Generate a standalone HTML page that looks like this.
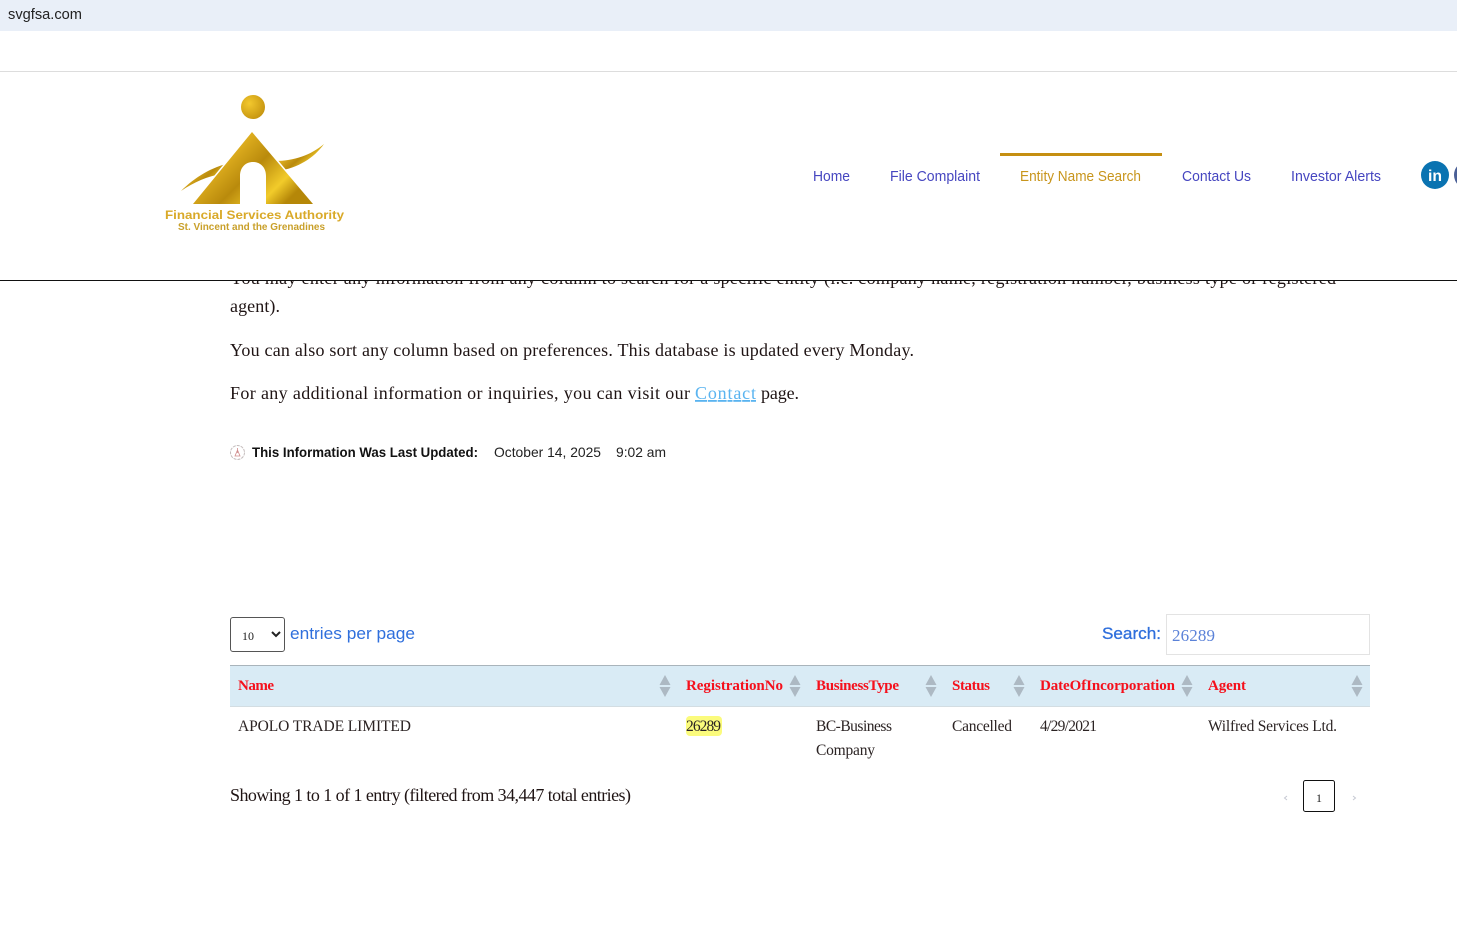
<!DOCTYPE html>
<html lang="en">
<head>
<meta charset="utf-8">
<title>Entity Name Search</title>
<style>
html,body{margin:0;padding:0;background:#fff;width:1457px;height:940px;overflow:hidden}
svg.page{position:absolute;left:0;top:0}
select{position:absolute;left:230px;top:617px;width:55px;height:35px;box-sizing:border-box;border:1px solid #555;border-radius:3px;background:#fff;font:12px "Liberation Serif",serif;color:#222;padding:3px 0 0 7px;margin:0}
.sans{font-family:"Liberation Sans",sans-serif}
.serif{font-family:"Liberation Serif",serif}
</style>
</head>
<body>
<svg class="page" width="1457" height="940" viewBox="0 0 1457 940" xmlns="http://www.w3.org/2000/svg">
<defs>
<linearGradient id="g" x1="0" y1="0" x2="1" y2="0.6">
<stop offset="0" stop-color="#a87c08"/><stop offset=".35" stop-color="#e0b020"/><stop offset=".6" stop-color="#b98a0c"/><stop offset=".85" stop-color="#f2cb2a"/><stop offset="1" stop-color="#b58708"/>
</linearGradient>
<radialGradient id="c" cx=".35" cy=".35" r=".8"><stop offset="0" stop-color="#f3c82e"/><stop offset="1" stop-color="#c08e0c"/></radialGradient>
</defs>

<g class="serif" font-size="18" fill="#1f1414">
<text x="230" y="284" textLength="1106">You may enter any information from any column to search for a specific entity (i.e. company name, registration number, business type or registered</text>
<text x="230" y="312" textLength="50">agent).</text>
<text x="230" y="356" textLength="684">You can also sort any column based on preferences. This database is updated every Monday.</text>
<text x="230" y="399" textLength="460">For any additional information or inquiries, you can visit our</text>
<text x="695" y="399" textLength="61" fill="#5ab4f0" text-decoration="underline">Contact</text>
<text x="761" y="399" textLength="38">page.</text>
</g>

<rect x="0" y="0" width="1457" height="31" fill="#e9eff8"/>
<text class="sans" x="8" y="19" font-size="14.5" fill="#222" textLength="74" lengthAdjust="spacingAndGlyphs">svgfsa.com</text>
<rect x="0" y="71" width="1457" height="1" fill="#ddd"/>
<rect x="0" y="72" width="1457" height="208" fill="#fff"/>
<rect x="0" y="280" width="1457" height="1" fill="#111"/>

<circle cx="253" cy="107" r="12" fill="url(#c)"/>
<path d="M181 191C195 177 212 167 230 163L222 174C208 176 194 182 181 191Z" fill="url(#g)"/>
<path d="M275 161C294 161 311 155 324 144C314 158 298 168 278 171Z" fill="url(#g)"/>
<path fill-rule="evenodd" d="M252 132L313 204H266V176C266 167 260 162 253 162C246 162 240 167 240 176V204H193Z" fill="url(#g)" stroke="#fff" stroke-width="3" paint-order="stroke"/>
<text class="sans" x="165" y="219" font-size="12" font-weight="bold" fill="#d9a928" textLength="179" lengthAdjust="spacingAndGlyphs">Financial Services Authority</text>
<text class="sans" x="178" y="230" font-size="10" font-weight="bold" fill="#c9a02a" textLength="147" lengthAdjust="spacingAndGlyphs">St. Vincent and the Grenadines</text>

<g class="sans" font-size="14.5" fill="#4646c0">
<text x="813" y="181" textLength="37" lengthAdjust="spacingAndGlyphs">Home</text>
<text x="890" y="181" textLength="90" lengthAdjust="spacingAndGlyphs">File Complaint</text>
<text x="1020" y="181" textLength="121" lengthAdjust="spacingAndGlyphs" fill="#c8951c">Entity Name Search</text>
<text x="1182" y="181" textLength="69" lengthAdjust="spacingAndGlyphs">Contact Us</text>
<text x="1291" y="181" textLength="90" lengthAdjust="spacingAndGlyphs">Investor Alerts</text>
</g>
<rect x="1000" y="153" width="162" height="3" fill="#c58f12"/>
<circle cx="1435" cy="175" r="14" fill="#0a73b1"/>
<text class="sans" x="1428" y="181" font-size="16" font-weight="bold" fill="#fff" textLength="14" lengthAdjust="spacingAndGlyphs">in</text>
<circle cx="1468" cy="175" r="14" fill="#4a5f96"/>

<circle cx="237.5" cy="452.5" r="7" fill="none" stroke="#c4bcbc" stroke-width="1" stroke-dasharray="3 1"/>
<path d="M237.5 448V453M235 456L237.5 450L240 456Z" fill="none" stroke="#d08a8a" stroke-width=".8"/>
<text class="sans" x="252" y="457" font-size="14" font-weight="bold" fill="#111" textLength="226" lengthAdjust="spacingAndGlyphs">This Information Was Last Updated:</text>
<text class="sans" x="494" y="457" font-size="14" fill="#222" textLength="107" lengthAdjust="spacingAndGlyphs">October 14, 2025</text>
<text class="sans" x="616" y="457" font-size="14" fill="#222" textLength="50" lengthAdjust="spacingAndGlyphs">9:02 am</text>

<text class="sans" x="290" y="639" font-size="17" fill="#2f6fdc" textLength="125" lengthAdjust="spacingAndGlyphs">entries per page</text>
<text class="sans" x="1102" y="639" font-size="16.5" fill="#2f6fdc" textLength="59" lengthAdjust="spacingAndGlyphs" stroke="#2f6fdc" stroke-width=".3">Search:</text>
<rect x="1166.5" y="614.5" width="203" height="40" fill="#fff" stroke="#e3e3e3"/>
<text class="serif" x="1172" y="641" font-size="17" fill="#5b82d8" textLength="43">26289</text>

<rect x="230" y="665" width="1140" height="42" fill="#d9ebf5"/>
<rect x="230" y="665" width="1140" height="1" fill="#a9b4bb"/>
<rect x="230" y="706" width="1140" height="1" fill="#d3dde2"/>
<g class="serif" font-size="15" font-weight="bold" fill="#f5101c">
<text x="238" y="690" textLength="36">Name</text>
<text x="686" y="690" textLength="97">RegistrationNo</text>
<text x="816" y="690" textLength="83">BusinessType</text>
<text x="952" y="690" textLength="38">Status</text>
<text x="1040" y="690" textLength="135">DateOfIncorporation</text>
<text x="1208" y="690" textLength="38">Agent</text>
</g>
<g fill="#adb9c3">
<path d="M659.5 685L665 675L670.5 685ZM659.5 687L665 697L670.5 687Z"/>
<path d="M789.5 685L795 675L800.5 685ZM789.5 687L795 697L800.5 687Z"/>
<path d="M925.5 685L931 675L936.5 685ZM925.5 687L931 697L936.5 687Z"/>
<path d="M1013.5 685L1019 675L1024.5 685ZM1013.5 687L1019 697L1024.5 687Z"/>
<path d="M1181.5 685L1187 675L1192.5 685ZM1181.5 687L1187 697L1192.5 687Z"/>
<path d="M1351.5 685L1357 675L1362.5 685ZM1351.5 687L1357 697L1362.5 687Z"/>
</g>

<rect x="686" y="716" width="36" height="20" rx="4" fill="#fbfb7c"/>
<g class="serif" font-size="15.5" fill="#2b2323">
<text x="238" y="731" textLength="173">APOLO TRADE LIMITED</text>
<text x="686" y="731" textLength="35">26289</text>
<text x="816" y="731" textLength="76">BC-Business</text>
<text x="816" y="755" textLength="59">Company</text>
<text x="952" y="731" textLength="60">Cancelled</text>
<text x="1040" y="731" textLength="57">4/29/2021</text>
<text x="1208" y="731" textLength="129">Wilfred Services Ltd.</text>
</g>
<text class="serif" x="230" y="801" font-size="18" fill="#1f1414" textLength="401">Showing 1 to 1 of 1 entry (filtered from 34,447 total entries)</text>

<rect x="1303.5" y="780.5" width="31" height="31" rx="2" fill="#fff" stroke="#111"/>
<text class="serif" x="1319" y="802" font-size="12" fill="#222" text-anchor="middle">1</text>
<path d="M1287 796L1284.5 798L1287 800" fill="none" stroke="#c5c8d2"/>
<path d="M1353 796L1355.5 798L1353 800" fill="none" stroke="#c5c8d2"/>
</svg>
<select><option>10</option></select>
</body>
</html>
